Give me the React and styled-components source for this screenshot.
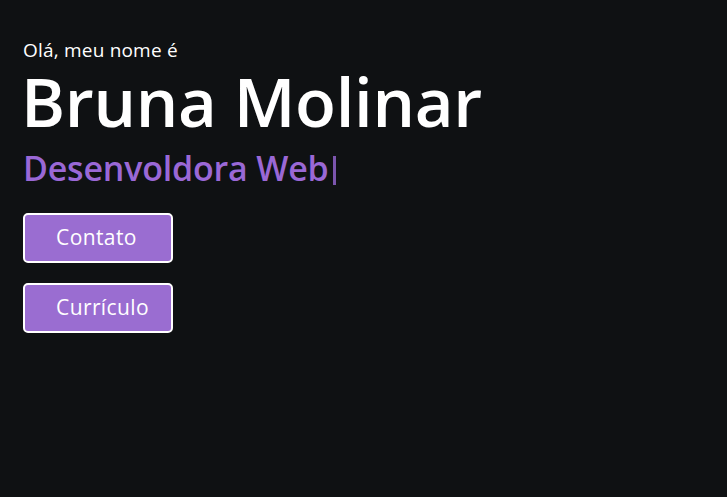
import styled, { createGlobalStyle } from 'styled-components';

const GlobalStyle = createGlobalStyle`
    * {
        box-sizing: border-box;
    }

    body {
        margin: 0;
        background-color: #0f1113;
        font-family: "Open Sans", "Noto Sans", sans-serif;
    }
`;

const Page = styled.main`
    min-height: 100vh;
    padding: 41px 23px;
    background-color: #0f1113;
`;

const Hero = styled.section`
    display: flex;
    flex-direction: column;
    align-items: flex-start;
`;

const Greeting = styled.p`
    margin: 0;
    font-size: 19px;
    line-height: 18px;
    letter-spacing: 0.2px;
    color: #ffffff;
`;

const Name = styled.h1`
    margin: 8px 0 0 -2px;
    font-size: 67px;
    line-height: 68px;
    font-weight: 600;
    letter-spacing: -0.3px;
    color: #ffffff;
`;

const Role = styled.h2`
    display: flex;
    align-items: center;
    margin: 16px 0 0 0;
    font-size: 34px;
    line-height: 33px;
    font-weight: 600;
    letter-spacing: -0.2px;
    color: #9a68d6;
`;

const Cursor = styled.span`
    display: inline-block;
    width: 3px;
    height: 29px;
    margin-left: 4px;
    margin-top: 5px;
    background-color: #7b55ad;
`;

const Actions = styled.div`
    display: flex;
    flex-direction: column;
    gap: 20px;
    margin-top: 28px;
`;

const Button = styled.button`
    width: 150px;
    height: 50px;
    padding: 0 0 2px 31px;
    text-align: left;
    font-family: inherit;
    font-size: 21px;
    letter-spacing: 0.4px;
    color: #ffffff;
    background-color: #9a6dd1;
    border: 2px solid #ffffff;
    border-radius: 5px;
    cursor: pointer;
`;

export default function App(){
    return <>
        <GlobalStyle/>
        <Page>
            <Hero>
                <Greeting>Olá, meu nome é</Greeting>
                <Name>Bruna Molinar</Name>
                <Role>Desenvoldora Web<Cursor/></Role>
                <Actions>
                    <Button>Contato</Button>
                    <Button>Currículo</Button>
                </Actions>
            </Hero>
        </Page>
    </>;
};
